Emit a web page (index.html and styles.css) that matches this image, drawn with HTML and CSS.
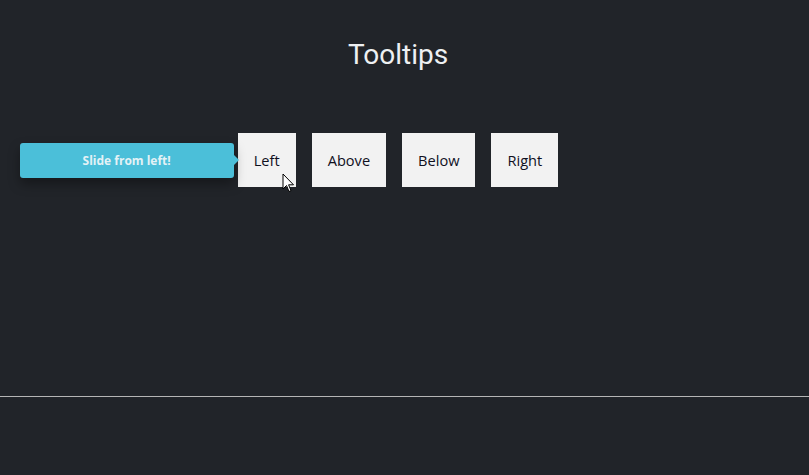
FILE: index.html
```html
<!DOCTYPE html>
<html>
<head>
<meta charset="utf-8">
<link rel="stylesheet" href="styles.css">
</head>
<body>
<div class="page">
  <h1 class="title">Tooltips</h1>
  <div class="buttons">
    <div class="btn-wrap">
      <div class="tooltip">Slide from left!</div>
      <button class="btn">Left</button>
      <svg class="cursor" width="13" height="20" viewBox="0 0 13 20"><path d="M1 1 L1 16 L4.5 12.5 L7 18.5 L9 17.6 L6.6 11.8 L11.5 11.8 Z" fill="#fff" stroke="#000" stroke-width="1" stroke-linejoin="round"/></svg>
    </div>
    <button class="btn">Above</button>
    <button class="btn">Below</button>
    <button class="btn">Right</button>
  </div>
</div>
<div class="rule"></div>
</body>
</html>
```
FILE: styles.css
```css
html, body {
  margin: 0;
  padding: 0;
  background: #212429;
  height: 100%;
}
.page {
  width: 796px;
  display: flex;
  flex-direction: column;
  align-items: center;
  height: 396px;
}
.title {
  margin: 38px 0 0;
  font-family: Roboto, sans-serif;
  font-weight: 400;
  font-size: 28px;
  line-height: 34px;
  color: #eef0f2;
}
.buttons {
  display: flex;
  gap: 16px;
  margin-top: 61px;
}
.btn-wrap {
  position: relative;
  display: flex;
}
.btn {
  border: none;
  background: #f2f2f2;
  color: #10101e;
  font-family: "Open Sans", sans-serif;
  font-size: 14.6px;
  height: 54px;
  padding: 0 16px;
  margin: 0;
}
.tooltip {
  position: absolute;
  right: 62px;
  top: 10px;
  width: 214px;
  height: 35px;
  box-sizing: border-box;
  background: #4bbfd9;
  border-radius: 3px;
  color: #e4f2f6;
  font-family: "Open Sans", sans-serif;
  font-weight: 700;
  font-size: 12px;
  line-height: 35px;
  text-align: center;
  box-shadow: 0 6px 12px rgba(0,0,0,0.35);
}
.tooltip::after {
  content: "";
  position: absolute;
  right: -5px;
  top: 12px;
  border-left: 5px solid #4bbfd9;
  border-top: 5px solid transparent;
  border-bottom: 5px solid transparent;
}
.cursor {
  position: absolute;
  left: 44px;
  top: 40px;
}
.rule {
  height: 1px;
  background: #b5b5b5;
  width: 100%;
}
```
